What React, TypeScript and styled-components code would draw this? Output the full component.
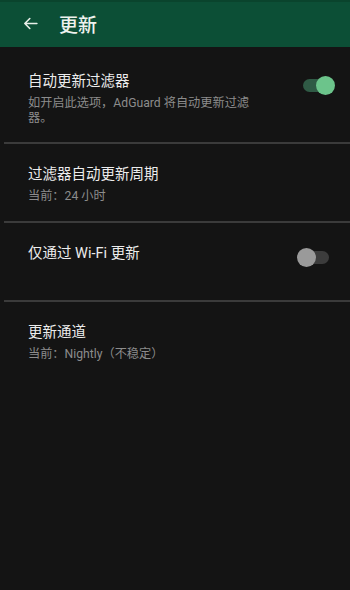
import styled, { createGlobalStyle } from "styled-components";

const GlobalStyle = createGlobalStyle`
  html, body {
    margin: 0;
    padding: 0;
    background: #141414;
  }
  body {
    font-family: "Roboto", "Noto Sans CJK SC", sans-serif;
  }
`;

type Setting = {
  title: string;
  subtitle?: string;
  toggle?: "on" | "off";
};

const settings: Setting[] = [
  {
    title: "自动更新过滤器",
    subtitle: "如开启此选项，AdGuard 将自动更新过滤器。",
    toggle: "on",
  },
  { title: "过滤器自动更新周期", subtitle: "当前：24 小时" },
  { title: "仅通过 Wi-Fi 更新", subtitle: "", toggle: "off" },
  { title: "更新通道", subtitle: "当前：Nightly（不稳定）" },
];

const App = () => {
  return (
    <Page>
      <GlobalStyle />
      <Header>
        <BackButton>
          <svg width="17" height="17" viewBox="0 0 24 24" fill="none">
            <path
              d="M21 12H4M11 5l-7 7 7 7"
              stroke="#e9efe9"
              strokeWidth="2.3"
              strokeLinecap="round"
              strokeLinejoin="round"
            />
          </svg>
        </BackButton>
        <Title>更新</Title>
      </Header>
      <List>
        {settings.map((s, i) => (
          <Row key={s.title} first={i === 0} last={i === settings.length - 1}>
            <TextBlock>
              <RowTitle>{s.title}</RowTitle>
              {s.subtitle !== undefined && (
                <RowSubtitle>{s.subtitle || "\u00a0"}</RowSubtitle>
              )}
            </TextBlock>
            {s.toggle && (
              <Switch on={s.toggle === "on"}>
                <Thumb on={s.toggle === "on"} />
              </Switch>
            )}
          </Row>
        ))}
      </List>
    </Page>
  );
};

export default App;

const Page = styled.div`
  width: 350px;
  height: 590px;
  background: #141414;
  overflow: hidden;
`;

const Header = styled.div`
  height: 47px;
  background: #0c4f36;
  border-top: 2px solid #0a442d;
  box-sizing: border-box;
  display: flex;
  align-items: center;
  padding-left: 22px;
  gap: 20px;
`;

const BackButton = styled.div`
  width: 17px;
  height: 17px;
  display: flex;
  margin-top: -2px;
`;

const Title = styled.h1`
  margin: 0;
  font-size: 19px;
  font-weight: 500;
  color: #eef2ee;
  font-family: "Roboto", "Noto Sans CJK SC", sans-serif;
  margin-top: -2px;
`;

const List = styled.div`
  display: flex;
  flex-direction: column;
`;

const Row = styled.div<{ first?: boolean; last?: boolean }>`
  display: flex;
  align-items: flex-start;
  justify-content: space-between;
  padding: ${({ first }) => (first ? "25px 17px 16px 24px" : "21px 17px 17px 24px")};
  margin-left: 4px;
  border-bottom: ${({ last }) => (last ? "none" : "2px solid #3b3b3b")};
`;

const TextBlock = styled.div`
  display: flex;
  flex-direction: column;
  gap: 2px;
`;

const RowTitle = styled.div`
  font-size: 14.5px;
  line-height: 20px;
  color: #ececec;
`;

const RowSubtitle = styled.div`
  font-size: 12.2px;
  line-height: 15px;
  color: #8c8c8c;
  width: 236px;
  padding-top: 2px;
`;

const Switch = styled.div<{ on: boolean }>`
  position: relative;
  width: 28px;
  height: 13px;
  border-radius: 7px;
  margin-top: 7px;
  margin-right: ${({ on }) => (on ? "2px" : "4px")};
  background: ${({ on }) => (on ? "#2f5a45" : "#3c3c3c")};
`;

const Thumb = styled.div<{ on: boolean }>`
  position: absolute;
  top: -3px;
  ${({ on }) => (on ? "right: -4px;" : "left: -4px;")}
  width: 19px;
  height: 19px;
  border-radius: 50%;
  background: ${({ on }) => (on ? "#6cc48b" : "#9a9a9a")};
`;
